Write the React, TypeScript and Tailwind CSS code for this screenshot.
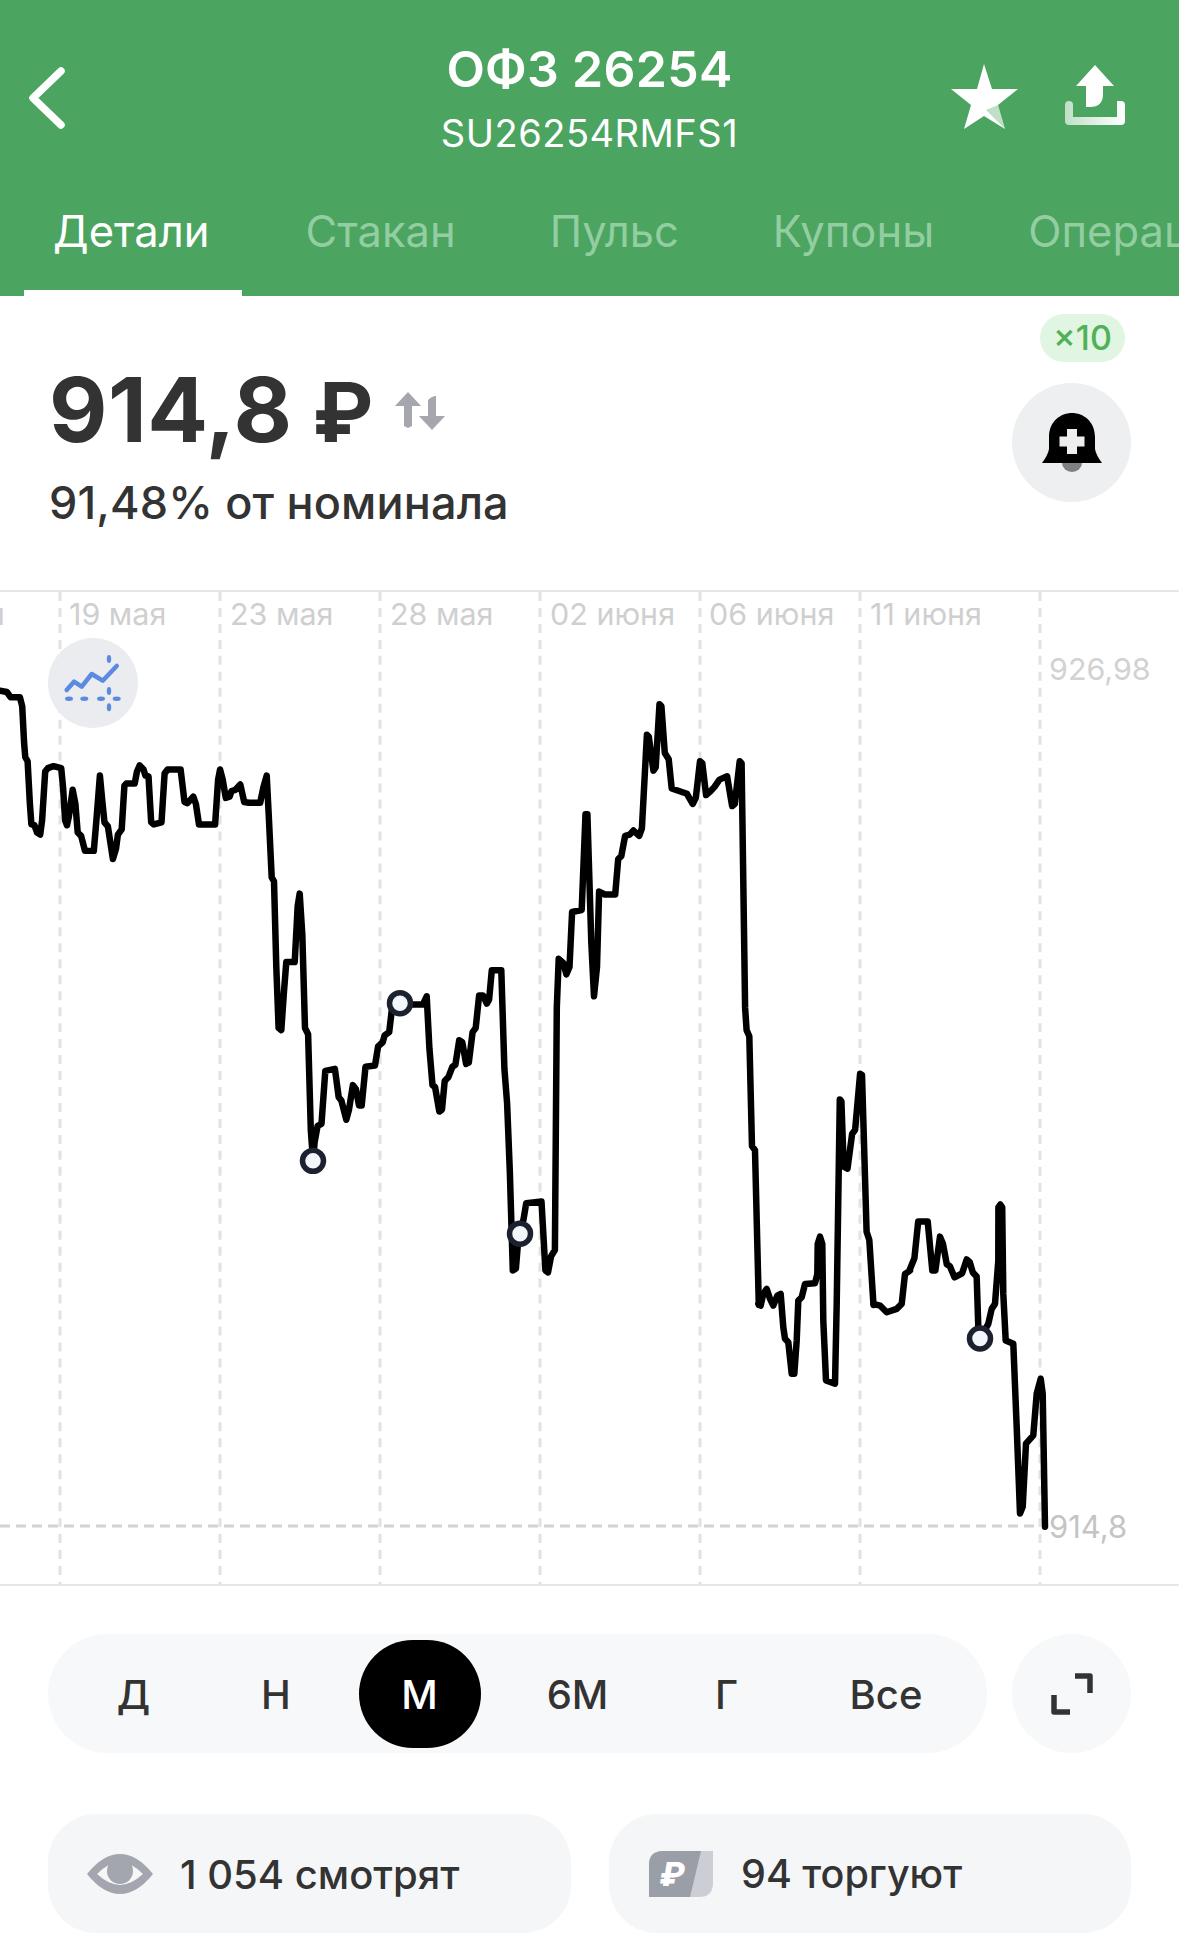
const tabs = ["Детали", "Стакан", "Пульс", "Купоны", "Операции"]
const periods = ["Д", "Н", "М", "6М", "Г", "Все"]

const gridX = [60, 220, 380, 540, 700, 860, 1040]
const dates = [
  { x: -92, label: "15 мая" },
  { x: 69, label: "19 мая" },
  { x: 230, label: "23 мая" },
  { x: 390, label: "28 мая" },
  { x: 550, label: "02 июня" },
  { x: 709, label: "06 июня" },
  { x: 870, label: "11 июня" },
]

// Price line traced from the picture. Each run has its own crop scale and origin.
type Run = { sx: number; sy: number; ox: number; oy: number; pts: number[] }
const runs: Run[] = [
  {
    sx: 2.613, sy: 2.45, ox: 0, oy: 680,
    pts: [0, 22, 18, 25, 28, 38, 52, 38, 58, 60, 63, 150, 66, 185, 72, 195, 78, 300, 82, 350, 90, 352, 97, 370, 105, 375, 110, 340, 118, 220, 125, 212, 140, 207, 160, 212, 165, 260, 170, 340, 175, 352, 180, 330, 190, 265, 197, 300, 203, 370, 212, 378, 222, 415, 245, 415, 252, 340, 261, 230, 268, 300, 273, 345, 282, 355, 295, 435, 303, 410, 308, 375, 318, 362, 325, 255, 330, 250, 352, 250, 358, 220, 365, 205, 375, 215, 380, 230, 388, 232, 395, 345, 402, 350, 422, 345, 430, 225, 438, 215, 472, 215, 482, 295, 490, 298, 505, 282, 512, 300, 520, 350, 562, 350, 570, 240, 575, 215, 582, 240, 590, 285, 600, 282, 605, 268, 615, 265, 628, 252, 638, 295, 650, 297, 680, 297, 688, 260, 697, 230, 703, 340, 710, 480, 716, 490, 722, 700, 728, 850, 735, 855, 742, 760, 748, 688, 770, 688, 778, 550, 783, 520, 790, 620, 797, 850, 805, 865, 812, 1100, 818, 1177, 822, 1130, 830, 1090, 840, 1085, 850, 955, 875, 950, 885, 1020, 892, 1028, 905, 1075, 912, 1050, 922, 990, 930, 1000, 938, 1040, 945, 1040, 955, 945, 980, 942, 988, 895, 1000, 885, 1005, 868, 1017, 860, 1025, 795, 1045, 790, 1075, 792, 1105, 792, 1115, 772, 1122, 900, 1130, 990, 1137, 995, 1148, 1055, 1155, 1050, 1162, 980, 1172, 970, 1182, 945, 1190, 940, 1200, 880, 1208, 885, 1218, 938, 1225, 935, 1235, 860, 1243, 850, 1252, 770, 1262, 770, 1272, 790, 1278, 780, 1285, 708, 1310, 708, 1318, 950, 1325, 1035, 1332, 1200, 1340, 1445, 1348, 1440, 1355, 1360, 1368, 1320, 1375, 1280, 1415, 1276, 1425, 1445, 1432, 1450, 1440, 1410, 1450, 1395, 1455, 800, 1460, 680, 1472, 690, 1480, 718, 1488, 700, 1495, 565, 1520, 560, 1530, 325, 1535, 325, 1545, 640, 1552, 772, 1560, 700],
  },
  {
    sx: 2.617, sy: 2.45, ox: 580, oy: 680,
    pts: [50, 515, 65, 522, 92, 522, 100, 435, 108, 428, 118, 378, 130, 375, 140, 365, 155, 378, 162, 360, 175, 130, 180, 135, 192, 218, 198, 210, 208, 55, 213, 60, 222, 175, 232, 190, 240, 262, 280, 275, 295, 300, 303, 285, 314, 195, 320, 200, 330, 278, 342, 268, 352, 258, 365, 240, 385, 232, 398, 305, 405, 300, 418, 195, 423, 200, 432, 800, 436, 855, 443, 870, 450, 1140, 458, 1150, 468, 1530],
  },
  {
    sx: 3, sy: 3, ox: 740, oy: 1260,
    pts: [55, 130, 62, 135, 70, 100, 80, 85, 90, 115, 100, 135, 112, 105, 122, 100, 130, 200, 135, 235, 145, 245, 155, 340, 163, 340, 170, 240, 175, 120, 185, 110, 195, 70, 225, 68, 232, 40],
  },
  {
    sx: 2.617, sy: 2.45, ox: 580, oy: 680,
    pts: [622, 1380, 628, 1362, 634, 1380],
  },
  {
    sx: 3, sy: 3, ox: 740, oy: 1260,
    pts: [250, 180, 258, 360, 285, 370, 290, 130],
  },
  {
    sx: 2.617, sy: 2.45, ox: 580, oy: 680,
    pts: [680, 1025, 684, 1030, 690, 1190, 700, 1195, 712, 1110, 720, 1100, 733, 962, 738, 965, 750, 1350, 757, 1370, 768, 1530],
  },
  {
    sx: 3, sy: 3, ox: 740, oy: 1260,
    pts: [400, 130, 420, 135, 440, 155, 470, 145, 485, 130, 495, 40, 510, 30],
  },
  {
    sx: 2.617, sy: 2.45, ox: 580, oy: 680,
    pts: [862, 1445, 875, 1415, 885, 1325, 910, 1325, 922, 1445, 930, 1445, 942, 1362, 950, 1380, 960, 1430, 968, 1435, 980, 1462, 1000, 1452, 1012, 1418, 1020, 1425, 1028, 1450, 1038, 1460],
  },
  {
    sx: 3, sy: 3, ox: 740, oy: 1260,
    pts: [710, 50, 715, 200, 720, 235, 745, 190, 755, 145, 765, 130, 775, 0],
  },
  {
    sx: 2.617, sy: 2.45, ox: 580, oy: 680,
    pts: [1095, 1290, 1100, 1283, 1105, 1290],
  },
  {
    sx: 3, sy: 3, ox: 740, oy: 1260,
    pts: [790, 100, 797, 240, 820, 250, 830, 500, 840, 760, 848, 740, 858, 550, 880, 525, 890, 400, 902, 355, 908, 400, 915, 800],
  },
]

const linePoints = runs
  .flatMap((r) =>
    r.pts.flatMap((v, i) =>
      i % 2 === 0 ? [`${(r.ox + v / r.sx).toFixed(1)},${(r.oy + r.pts[i + 1] / r.sy).toFixed(1)}`] : []
    )
  )
  .join(" ")

const markers = [
  [313, 1160],
  [400, 1002],
  [520, 1233],
  [980, 1338],
]

function Chart() {
  return (
    <div className="relative h-[996px] border-y-2 border-[#e6e6e6] overflow-hidden">
      <svg className="absolute inset-0 w-full h-full" viewBox="0 590 1179 994" preserveAspectRatio="none">
        {gridX.map((x) => (
          <line key={x} x1={x} x2={x} y1="590" y2="1585" stroke="#e2e2e2" strokeWidth="3" strokeDasharray="9 7" />
        ))}
        <line x1="0" x2="1040" y1="1526" y2="1526" stroke="#d2d2d2" strokeWidth="3" strokeDasharray="10 6" />
        {dates.map((d) => (
          <text key={d.label} x={d.x} y="623" fontSize="30.5" fill="#cfcfcf">
            {d.label}
          </text>
        ))}
        <text x="1049" y="678" fontSize="30.5" fill="#d2d2d2">926,98</text>
        <text x="1049" y="1538" fontSize="31" fill="#c4c4c4">914,8</text>
        <polyline points={linePoints} fill="none" stroke="#000" strokeWidth="6.5" strokeLinejoin="round" strokeLinecap="round" />
        {markers.map(([cx, cy]) => (
          <circle key={cx} cx={cx} cy={cy} r="10.5" fill="#f3f6fb" stroke="#1c2130" strokeWidth="5.5" />
        ))}
      </svg>
      {/* Forecast toggle */}
      <div className="absolute left-[48px] top-[46px] w-[90px] h-[90px] rounded-full bg-[#eaecef]">
        <svg width="90" height="90" viewBox="0 0 90 90" fill="#5b8ae0">
          <polyline points="18.7,52 26,43.7 33.7,48.7 43.7,36 54.7,42.7 68.7,28" fill="none" stroke="#5b8ae0" strokeWidth="4.5" strokeLinecap="round" strokeLinejoin="round" />
          <ellipse cx="21" cy="60.7" rx="4" ry="2.2" />
          <ellipse cx="36.3" cy="60.7" rx="4" ry="2.2" />
          <ellipse cx="53" cy="60.7" rx="4" ry="2.2" />
          <ellipse cx="68.7" cy="60.7" rx="4" ry="2.2" />
          <ellipse cx="61" cy="21" rx="2.2" ry="4" />
          <ellipse cx="61" cy="53" rx="2.2" ry="4" />
          <ellipse cx="61" cy="69.3" rx="2.2" ry="4" />
        </svg>
      </div>
    </div>
  )
}

export default function App() {
  return (
    <div className="w-[1179px] h-[1934px] overflow-hidden bg-white text-[#333333] font-['Inter',sans-serif]">
      {/* Header */}
      <header className="relative h-[296px] bg-[#4ba45f] overflow-hidden">
        <div className="flex flex-col items-center pt-[37px]">
          <h1 className="text-[50px] leading-[64px] font-semibold tracking-[0.3px] text-white">ОФЗ 26254</h1>
          <p className="mt-[10px] text-[38px] leading-[44px] text-white tracking-[0.5px]">SU26254RMFS1</p>
        </div>
        <svg className="absolute left-0 top-0" width="1179" height="140" viewBox="0 0 1179 140">
          <polyline points="61,71 33,98 61,125" fill="none" stroke="#fff" strokeWidth="7.5" strokeLinecap="round" strokeLinejoin="round" />
          <path d="M984 64 L992 89 L1018 89 L998 105 L1005 129 L984 116 L964 129 L971 105 L951 89 L977 89 Z" fill="#fff" />
          <path d="M986 110 L998 105 L1005 129 Z" fill="#4ba45f" fillOpacity="0.35" />
          <path d="M1095 65 L1114 86 L1103 86 L1103 94 Q1103 107 1090 107 L1086 107 L1086 86 L1076 86 Z" fill="#fff" />
          <defs>
            <linearGradient id="tray" x1="0" x2="1" y1="0" y2="0">
              <stop offset="0" stopColor="#fff" stopOpacity="0.65" />
              <stop offset="1" stopColor="#fff" stopOpacity="1" />
            </linearGradient>
          </defs>
          <path d="M1065 105 Q1065 101 1069 101 Q1073 101 1073 105 L1073 117 L1117 117 L1117 101 L1121 101 Q1125 101 1125 105 L1125 121 Q1125 125 1121 125 L1069 125 Q1065 125 1065 121 Z" fill="url(#tray)" />
        </svg>
        <nav className="absolute left-[24px] bottom-0 flex gap-[32px] whitespace-nowrap">
          {tabs.map((tab, i) => (
            <div key={tab} className={`h-[104px] pt-[14px] text-[43.5px] leading-[50px] ${i === 0 ? "pl-[29px] pr-[33px] text-white border-b-[6px] border-white" : "px-[31px] text-[#93cda2]"}`}>
              {tab}
            </div>
          ))}
        </nav>
      </header>

      {/* Price */}
      <section className="h-[294px] pl-[49px] pr-[48px] pt-[18px] flex justify-between">
        <div className="pt-[46px]">
          <div className="flex items-center">
            <span className="text-[90px] leading-[100px] font-bold tracking-[0.5px]">
              914,8 <span className="text-[82px] -ml-[2px]">₽</span>
            </span>
            <svg className="ml-[21px] -mt-[2px]" width="50" height="38" viewBox="0 0 50 38" fill="#a5a7ac">
              <path d="M13 0 L26 14 L17 14 L17 34 L13 36 L9 34 L9 14 L0 14 Z" />
              <path d="M37 38 L50 24 L41 24 L41 4 Q37 4 33 8 L33 24 L24 24 Z" />
            </svg>
          </div>
          <p className="mt-[14px] text-[45px] leading-[52px] font-medium tracking-[0.15px]">91,48% от номинала</p>
        </div>
        <div className="flex flex-col items-end">
          <div className="mr-[6px] w-[85px] h-[48px] rounded-full bg-[#e0f5e2] text-[#4fb257] text-[34px] leading-[48px] font-medium text-center">
            ×10
          </div>
          <div className="mt-[21px] w-[119px] h-[119px] rounded-full bg-[#edeff1] flex items-center justify-center">
            <svg width="60" height="60" viewBox="0 0 60 60">
              <path d="M20 50 H40 A10 9 0 0 1 20 50 Z" fill="#808080" />
              <path d="M30 0 C19 0 7 8 7 24 L7 36 Q6 42 0 50 L60 50 Q54 42 53 36 L53 24 C53 8 41 0 30 0 Z" fill="#000" />
              <path d="M25 16 H35 V23.500 H42.500 V33.500 H35 V41 H25 V33.500 H17.500 V23.500 H25 Z" fill="#eeeeee" />
            </svg>
          </div>
        </div>
      </section>

      <Chart />

      {/* Period switcher */}
      <div className="mt-[48px] pl-[48px] pr-[48px] flex justify-between">
        <div className="w-[939px] h-[119px] rounded-full bg-[#f7f8f9] grid grid-cols-[171px_114px_173px_143px_155px_164px] items-center">
          {periods.map((p) => (
            <div key={p} className="flex justify-center">
              <div className={`h-[108px] w-[122px] pt-[3px] rounded-full flex items-center justify-center text-[40px] font-medium whitespace-nowrap ${p === "М" ? "bg-black text-white" : ""}`}>
                {p}
              </div>
            </div>
          ))}
        </div>
        <div className="w-[119px] h-[119px] rounded-full bg-[#f7f8f9] flex items-center justify-center">
          <svg width="44" height="44" viewBox="0 0 44 44" fill="none" stroke="#333" strokeWidth="5.5" strokeLinejoin="round">
            <path d="M25 4 H40 V21" />
            <path d="M4 23 V40 H20" />
          </svg>
        </div>
      </div>

      {/* Activity */}
      <div className="mt-[61px] pl-[48px] pr-[48px] flex justify-between">
        <div className="w-[523px] h-[119px] rounded-[48px] bg-[#f5f6f8] pl-[39px] flex items-center">
          <svg width="66" height="40" viewBox="0 0 66 40">
            <path d="M0 20 Q16 0 33 0 Q50 0 66 20 Q50 40 33 40 Q16 40 0 20 Z" fill="#a3a6ae" />
            <path d="M10 20 Q22 8 33 8 Q44 8 56 20 Q44 31 33 31 Q22 31 10 20 Z" fill="#f5f6f8" />
            <circle cx="33" cy="17" r="13" fill="#a3a6ae" />
          </svg>
          <span className="ml-[27px] pt-[3px] text-[40px] font-medium whitespace-nowrap">1 054 смотрят</span>
        </div>
        <div className="w-[522px] h-[119px] rounded-[48px] bg-[#f5f6f8] pl-[40px] flex items-center">
          <svg width="64" height="46" viewBox="0 0 64 46">
            <path d="M14 0 H64 V32 Q64 46 50 46 H0 V14 Q0 0 14 0 Z" fill="#cbced4" />
            <path d="M14 0 H52 L41 46 H0 V14 Q0 0 14 0 Z" fill="#9a9ea6" />
            <text x="23" y="35" textAnchor="middle" fontSize="33" fontWeight="800" fontStyle="italic" fill="#fff">₽</text>
          </svg>
          <span className="ml-[28px] pt-[3px] text-[39.5px] font-medium whitespace-nowrap">94 торгуют</span>
        </div>
      </div>
    </div>
  )
}
